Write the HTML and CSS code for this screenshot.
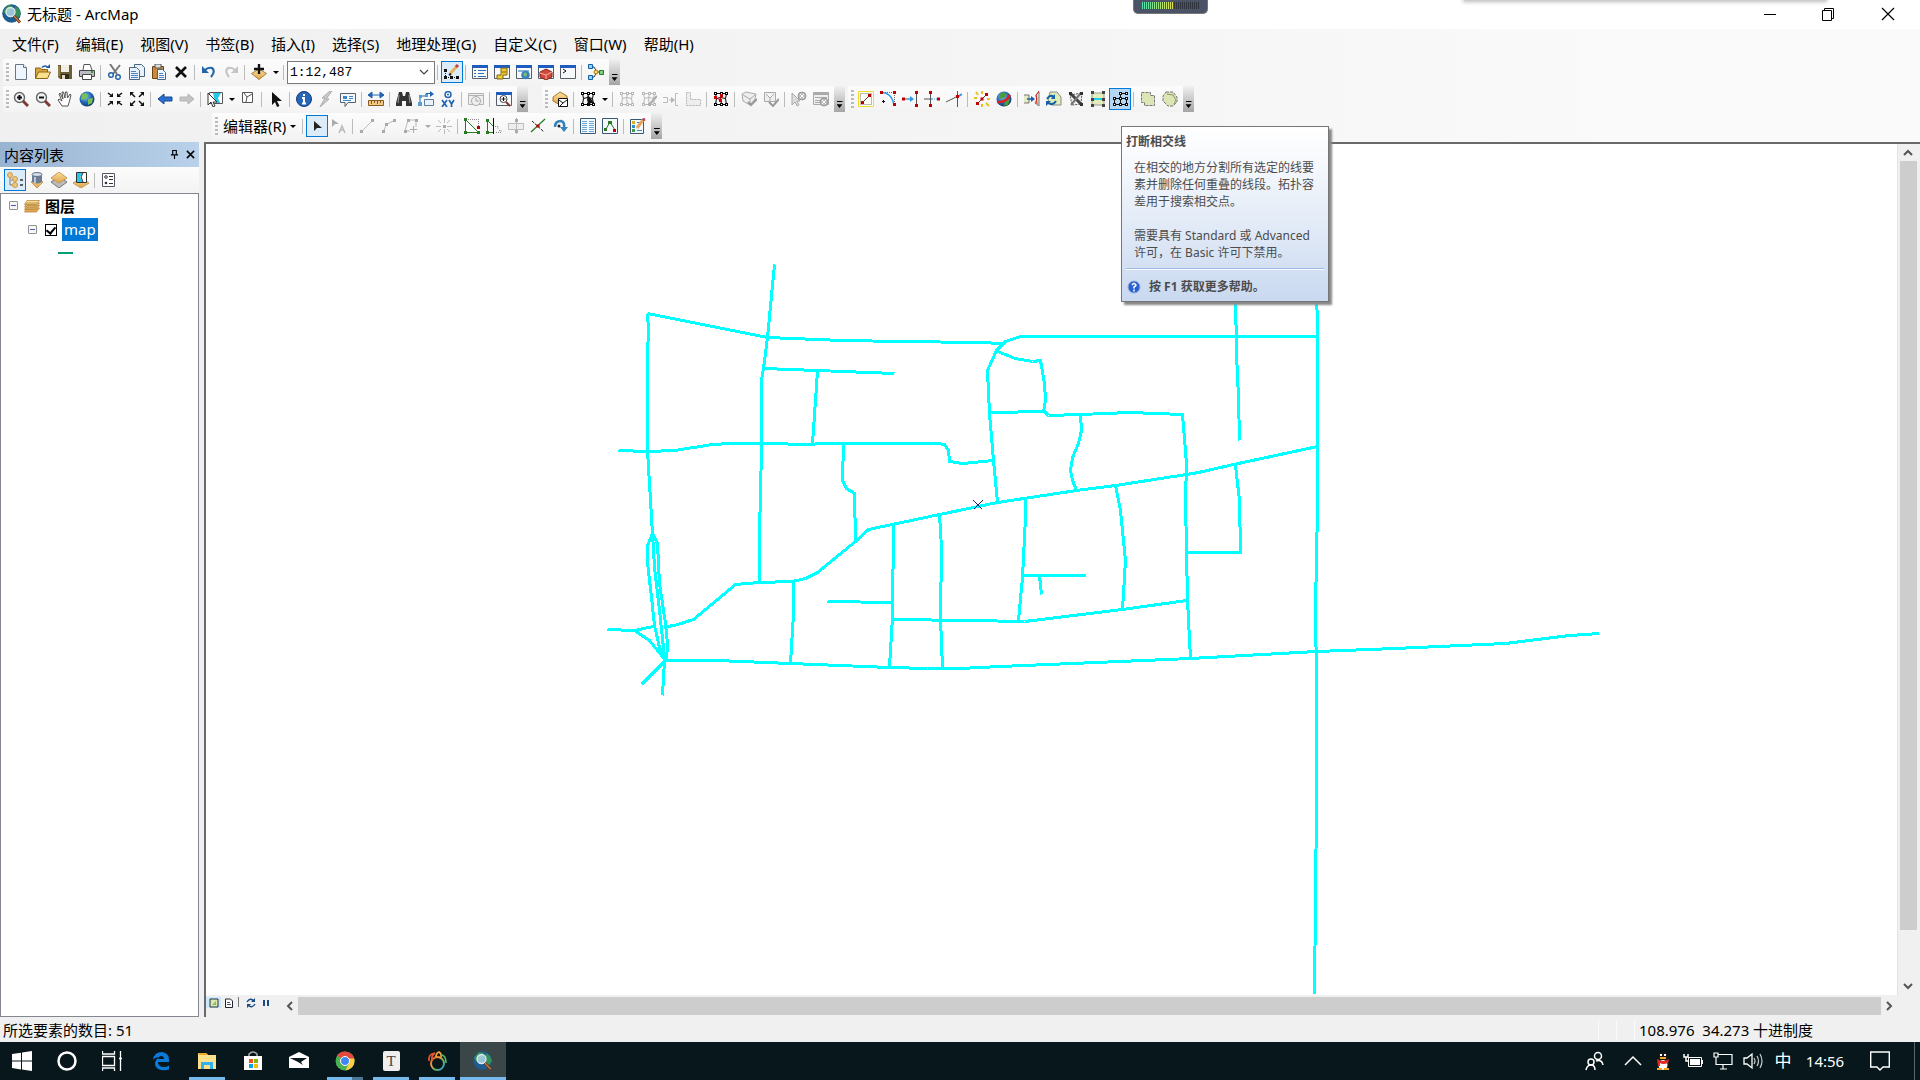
FILE: index.html
```
<!DOCTYPE html>
<html lang="zh-CN">
<head>
<meta charset="utf-8">
<title>无标题 - ArcMap</title>
<link rel="stylesheet" href="styles.css">
</head>
<body>
<svg class="defs" aria-hidden="true">
  <defs>
    <radialGradient id="globe" cx="0.4" cy="0.35" r="0.7"><stop offset="0" stop-color="#7fc4ee"/><stop offset="0.6" stop-color="#1f63b0"/><stop offset="1" stop-color="#123262"/></radialGradient>
    <linearGradient id="gold" x1="0" y1="0" x2="0" y2="1"><stop offset="0" stop-color="#fbe3a2"/><stop offset="1" stop-color="#dfa045"/></linearGradient>
    <linearGradient id="rainbow" x1="0" y1="0" x2="1" y2="1"><stop offset="0" stop-color="#e33f2f"/><stop offset="0.35" stop-color="#f2a33a"/><stop offset="0.65" stop-color="#58b56b"/><stop offset="1" stop-color="#3b8ee0"/></linearGradient>
    <symbol id="arcmap" viewBox="0 0 20 20"><circle cx="9.500" cy="9.500" r="9.300" fill="#1d5c92"/><path d="M1 7l5-6 5 1-2 4-5 5zM13 2l4 3 2 5-4 5-3-5z" fill="#35915a"/><circle cx="8.500" cy="8" r="4.500" fill="#b9dcea" fill-opacity=".8" stroke="#dfe8ea" stroke-width="1.300"/><path d="M12 12l6 6.500" stroke="#7a3f1c" stroke-width="3"/><path d="M12 12l5.500 6" stroke="#e09a68" stroke-width="1"/></symbol>
    <symbol id="window" viewBox="0 0 16 16"><path d="M.5 1.500h15v13H.5z" fill="#f7f9fb" stroke="#555d68"/><path d="M0 1h16v3H0z" fill="#1f5cc0"/></symbol>
    <symbol id="lens" viewBox="0 0 16 16"><circle cx="6.500" cy="6.500" r="5" fill="#eef3f6" stroke="#666" stroke-width="1.400"/><path d="M10 10l5 5" stroke="#7d3b34" stroke-width="3"/><path d="M4 6.500h5" stroke="#111" stroke-width="2"/></symbol>
    <symbol id="mesh" viewBox="0 0 16 16"><path d="M2.500 2.500h11M3.500 7.500l4-1 5 1M2.500 13.500h11M2.500 2.500l1 5-1 6M8.500 2.500l-1 5 1 6M13.500 2.500l-1 5 1 6" fill="none" stroke="currentColor"/><path d="M1 1h3v3H1zM7 1h3v3H7zM12 1h3v3h-3zM1 12h3v3H1zM7 12h3v3H7zM12 12h3v3h-3z" fill="currentColor"/><path d="M2 2h1v1H2zM8 2h1v1H8zM13 2h1v1h-1zM2 13h1v1H2zM8 13h1v1H8zM13 13h1v1h-1z" fill="#fff"/></symbol>
    <symbol id="page" viewBox="0 0 16 16"><path d="M2.500.5h8l3 3v12h-11z" fill="#eef5fd" stroke="#677584"/><path d="M10.500.5v3h3" fill="#fff" stroke="#677584"/></symbol>
  </defs>
</svg>
<div class="app">
  <header class="titlebar">
    <svg class="appicon"><use href="#arcmap"/></svg>
    <h1>无标题 - ArcMap</h1>
    <div class="winbtns">
      <button aria-label="最小化"><svg class="ic"><path d="M2 8.500h12" stroke="#000"/></svg></button>
      <button aria-label="还原"><svg class="ic"><path d="M2.500 4.500h9v10h-9zM4.500 4.500v-2h9v10h-2" fill="none" stroke="#000"/></svg></button>
      <button aria-label="关闭"><svg class="ic"><path d="M2 2l12 12M14 2L2 14" stroke="#000" stroke-width="1.200"/></svg></button>
    </div>
    <div class="recorder"><i></i></div>
    <div class="dropshade"></div>
  </header>

  <div class="bars">
    <nav class="menu">
      <button>文件(F)</button><button>编辑(E)</button><button>视图(V)</button><button>书签(B)</button><button>插入(I)</button><button>选择(S)</button><button>地理处理(G)</button><button>自定义(C)</button><button>窗口(W)</button><button>帮助(H)</button>
    </nav>

    <div class="row">
      <div class="toolbar">
        <i class="grip"></i>
        <button aria-label="新建"><svg class="ic"><use href="#page"/></svg></button>
        <button aria-label="打开"><svg class="ic"><path d="M.5 14V4h5l1 1.500h6V8" fill="#d9a53c" stroke="#8a6414"/><path d="M.5 14.500L3.500 8h12l-3 6.500z" fill="#fbe08c" stroke="#8a6414"/><path d="M7 3.500q3-3 6 0" fill="none" stroke="#1a5aa8" stroke-width="1.500"/><path d="M11 4h4V0z" fill="#1a5aa8"/></svg></button>
        <button aria-label="保存"><svg class="ic"><path d="M1 1h14v14H3l-2-2z" fill="#6b5c34"/><path d="M4 1h8v7H4z" fill="#f1efe4"/><path d="M4 10h8v5H4z" fill="#2e2a20"/><path d="M5 11h3v4H5z" fill="#e4dcc2"/><path d="M2 2v10" stroke="#b9a35c"/></svg></button>
        <button aria-label="打印"><svg class="ic"><path d="M4 6l1-5.500h6L13 6" fill="#fff" stroke="#555"/><path d="M.5 6.500h15v6H.5z" fill="#b9bdc0" stroke="#444"/><path d="M3.500 10.500h9v5h-9z" fill="#fff" stroke="#444"/><path d="M12 8h2" stroke="#2c9a3c" stroke-width="2"/></svg></button>
        <i class="sep"></i>
        <button aria-label="剪切"><svg class="ic"><path d="M3 0l7 10M13 1L6 10" stroke="#777" stroke-width="2"/><circle cx="4" cy="11" r="2.300" fill="none" stroke="#2763a8" stroke-width="1.500"/><circle cx="11" cy="13" r="2.300" fill="none" stroke="#2763a8" stroke-width="1.500"/></svg></button>
        <button aria-label="复制"><svg class="ic"><path d="M5.500.5h7l3 3v9h-10z" fill="#e9f2fc" stroke="#4a6580"/><path d="M.5 3.500h7l3 3v9H.5z" fill="#e9f2fc" stroke="#4a6580"/><path d="M2 7.500h5M2 9.500h7M2 11.500h7M2 13.500h7" stroke="#4a83bf"/></svg></button>
        <button aria-label="粘贴"><svg class="ic"><path d="M1.500 2.500h11v12h-11z" fill="#c98a3c" stroke="#70430f"/><path d="M4 0h6v4H4z" fill="#ddd" stroke="#555"/><path d="M6.500 5.500h5l3 3v7h-8z" fill="#eef5fd" stroke="#4a6580"/><path d="M8 9.500h4M8 11.500h5M8 13.500h5" stroke="#4a83bf"/></svg></button>
        <button aria-label="删除"><svg class="ic"><path d="M3 3l10 10M13 3L3 13" stroke="#111" stroke-width="2.600"/></svg></button>
        <i class="sep"></i>
        <button aria-label="撤消"><svg class="ic"><path d="M4 6q3-3 7-2 4 3-1 9" fill="none" stroke="#2366a8" stroke-width="2.200"/><path d="M1 2v7h7z" fill="#2366a8"/></svg></button>
        <button aria-label="恢复"><svg class="ic"><path d="M12 6Q9 3 5 4q-4 3 1 9" fill="none" stroke="#c4c4c4" stroke-width="2.200"/><path d="M15 2v7H8z" fill="#c4c4c4"/></svg></button>
        <i class="sep"></i>
        <button aria-label="添加数据"><svg class="ic"><path d="M8 5l7.500 4.500L8 15.500.5 9.500z" fill="url(#gold)" stroke="#a8803a"/><path d="M8 0v10M3 5h10" stroke="#111" stroke-width="2.400"/></svg></button>
        <button class="drop" aria-label="更多数据"></button>
        <i class="sep"></i>
        <span class="scale"><select aria-label="地图比例"><option>1:12,487</option></select><svg class="chev"><path d="M1 2l4 4 4-4" fill="none" stroke="#444" stroke-width="1.200"/></svg></span>
        <i class="sep"></i>
        <button class="on" aria-label="编辑器工具条"><svg class="ic"><path d="M2 13.500h12M1.500 14V7" stroke="#111" stroke-dasharray="1 1"/><path d="M0 5h3v3H0zM0 12h3v3H0zM6 12h3v3H6zM12 12h3v3h-3z" fill="#111"/><path d="M6 10l7-8" stroke="#e7b45c" stroke-width="3"/><path d="M12 3l2-2" stroke="#c53f4d" stroke-width="3"/><path d="M5 11l2-1" stroke="#222" stroke-width="2"/></svg></button>
        <i class="sep"></i>
        <button aria-label="内容列表"><svg class="ic"><use href="#window"/><path d="M2 6.500h2M2 9.500h2M2 12.500h2M6 6.500h8M6 9.500h6M6 12.500h8" stroke="#2b6fb5"/></svg></button>
        <button aria-label="目录"><svg class="ic"><use href="#window"/><path d="M7 4h6v7H9v4H3v-4h4z" fill="#f0ca32" stroke="#7a6412"/><path d="M8 8h4" stroke="#7a6412"/></svg></button>
        <button aria-label="搜索"><svg class="ic"><use href="#window"/><path d="M2 7h11" stroke="#8ab4d8" stroke-width="2"/><circle cx="9.500" cy="11" r="4.300" fill="#3a80c0"/><path d="M7 10l3-2 1 3-2 2z" fill="#7ac45c"/></svg></button>
        <button aria-label="ArcToolbox"><svg class="ic"><use href="#window"/><path d="M2 8l6-3 6 3v5l-6 3-6-3z" fill="#d1493c" stroke="#8a2318"/><path d="M2 9l6 2 6-3M8 11v4" fill="none" stroke="#f5b3a6"/></svg></button>
        <button aria-label="Python"><svg class="ic"><use href="#window"/><path d="M3 5l3 2-3 2" fill="none" stroke="#111"/></svg></button>
        <i class="sep"></i>
        <button aria-label="模型构建器"><svg class="ic"><path d="M3 3h3l3 5h4M3 13h3l3-5" fill="none" stroke="#333"/><path d="M.5.500h4v4h-4zM.5 11.500h4v4h-4z" fill="#8fd4f7" stroke="#1461a8"/><circle cx="8" cy="8" r="2" fill="#ffd95a" stroke="#a77b12"/><path d="M11.500 6.500h4v4h-4z" fill="#85cf78" stroke="#267a2c"/></svg></button>
        <button class="more" aria-label="工具条选项"></button>
      </div>
    </div>

    <div class="row">
      <div class="toolbar">
        <i class="grip"></i>
        <button aria-label="放大"><svg class="ic"><use href="#lens"/><path d="M6.500 4v5" stroke="#111" stroke-width="2"/></svg></button>
        <button aria-label="缩小"><svg class="ic"><use href="#lens"/></svg></button>
        <button aria-label="平移"><svg class="ic"><path d="M5 15L1 9l1-1 3 2L2 3l1-1 3 6-1-7h1.500L8 7l.5-6H10l.5 6L13 3l1 1-1.500 6L11 15z" fill="#fff" stroke="#555"/></svg></button>
        <button aria-label="全图"><svg class="ic"><circle cx="8" cy="8" r="7.500" fill="url(#globe)"/><path d="M3 3l4-1 2 3-3 3-4 1zM9 8l5-1-1 5-4 2z" fill="#7abf52"/></svg></button>
        <i class="sep"></i>
        <button aria-label="固定比例放大"><svg class="ic"><path d="M1 2l4 3M15 2l-4 3M1 14l4-3M15 14l-4-3" stroke="#111" stroke-width="1.500"/><path d="M6 2v4H2zM10 2v4h4zM6 14v-4H2zM10 14v-4h4z" fill="#111"/></svg></button>
        <button aria-label="固定比例缩小"><svg class="ic"><path d="M2 2l4 4M14 2l-4 4M2 14l4-4M14 14l-4-4" stroke="#111" stroke-width="1.500"/><path d="M1 5V1h4zM15 5V1h-4zM1 11v4h4zM15 11v4h-4z" fill="#111"/></svg></button>
        <i class="sep"></i>
        <button aria-label="返回"><svg class="ic"><path d="M1 8l6-5v3h8v4H7v3z" fill="#2a6fd0" stroke="#174a94"/></svg></button>
        <button aria-label="前进"><svg class="ic"><path d="M15 8L9 3v3H1v4h8v3z" fill="#c4c4c4" stroke="#b4b4b4"/></svg></button>
        <i class="sep"></i>
        <button aria-label="选择要素"><svg class="ic"><path d="M2.500 1.500h13v11h-13z" fill="#fff" stroke="#555"/><path d="M6 2h8l-3 5 2 5H9L7 7z" fill="#27c7e8"/><path d="M1 2v12l3-3 2 5 2-1-2-4h4z" fill="#fff" stroke="#333"/></svg></button>
        <button class="drop" aria-label="选择方式"></button>
        <button aria-label="清除所选要素"><svg class="ic"><path d="M2.500 1.500h10v10h-10zM4 2l3 4-1 5M7 6l5-3" fill="#fff" stroke="#555"/></svg></button>
        <i class="sep"></i>
        <button aria-label="选择元素"><svg class="ic"><path d="M4 1v13l3-3 2 5 2.500-1L9 10h5z" fill="#111"/></svg></button>
        <i class="sep"></i>
        <button aria-label="识别"><svg class="ic"><circle cx="8" cy="8" r="7.500" fill="#2665b8" stroke="#123c7c"/><path d="M8 3v2M6 7h2v5M6 12.500h4" fill="none" stroke="#fff" stroke-width="2"/></svg></button>
        <button aria-label="超链接"><svg class="ic"><path d="M12 0L4 7h3l-5 9 9-8H8l6-8z" fill="#ccc" stroke="#aaa"/></svg></button>
        <button aria-label="HTML 弹出窗口"><svg class="ic"><path d="M.5 2.500h15v9H8l-3 4v-4H.5z" fill="#f4f8fb" stroke="#54606c"/><path d="M3 5h4v3H3z" fill="#3b86c9"/><path d="M9 5.500h4M9 7.500h4M3 9.500h8" stroke="#3b86c9"/></svg></button>
        <i class="sep"></i>
        <button aria-label="测量"><svg class="ic"><path d="M.5 9.500h15v5H.5z" fill="#f0c987" stroke="#8a5c1f"/><path d="M3.500 10v3M6.500 10v2M9.500 10v3M12.500 10v2" stroke="#8a5c1f"/><path d="M0 4l4-3v6zM16 4l-4-3v6zM4 4h8" fill="#1f63b0" stroke="#1f63b0"/></svg></button>
        <i class="sep"></i>
        <button aria-label="查找"><svg class="ic"><path d="M3 1h3l1 4h2l1-4h3l3 11v3H10v-5H6v5H0v-3z" fill="#333"/><path d="M3 4L2 12M13 4l1 8" stroke="#999"/></svg></button>
        <button aria-label="查找路径"><svg class="ic"><path d="M2 14V5h6V2.500h4" fill="none" stroke="#1f63b0"/><path d="M0 11h4v4H0zM1 4h3v3H1zM7 3h3v3H7z" fill="#5b9bd5"/><path d="M6.500 8.500h9v6h-9z" fill="#e9f2fc" stroke="#5a7f9e"/><path d="M12 0l4 3-4 3z" fill="#1f63b0"/></svg></button>
        <button aria-label="转到 XY"><svg class="ic"><circle cx="8" cy="3.500" r="3" fill="none" stroke="#1f63b0" stroke-width="1.500"/><circle cx="8" cy="3.500" r="1" fill="#1f63b0"/><path d="M2 9l5 7M7 9l-5 7M9 9l2.500 4L14 9M11.500 13v3" fill="none" stroke="#1f63b0" stroke-width="1.700"/></svg></button>
        <i class="sep"></i>
        <button aria-label="时间滑块"><svg class="ic"><path d="M.5 2.500h15v11H.5zM0 4.500h16" fill="#eee" stroke="#b4b4b4"/><circle cx="8" cy="10" r="4.500" fill="#eee" stroke="#aaa"/><path d="M8 7v3h3" fill="none" stroke="#aaa"/></svg></button>
        <i class="sep"></i>
        <button aria-label="创建查看器窗口"><svg class="ic"><use href="#window"/><circle cx="7.500" cy="8" r="3.500" fill="#fff" stroke="#444"/><path d="M7.500 6v4M5.500 8h4" stroke="#111"/><path d="M10 11l4 4" stroke="#7d3b34" stroke-width="2"/></svg></button>
        <button class="more" aria-label="工具条选项"></button>
      </div>
      <div class="toolbar topo">
        <i class="grip"></i>
        <button aria-label="选择拓扑"><svg class="ic"><path d="M1 6l7-5 7 4v4l-7 5-7-4z" fill="url(#gold)" stroke="#a77b2a"/><path d="M6.500 7.500h9v8h-9zM7 9l4 3-3 3M11 12l4-3" fill="#fff" stroke="#111"/></svg></button>
        <i class="sep"></i>
        <button aria-label="拓扑编辑工具"><svg class="ic"><use href="#mesh"/><path d="M8 4v11l3-3 4 1z" fill="#111"/></svg></button>
        <button class="drop" aria-label="拓扑编辑选项"></button>
        <i class="sep"></i>
        <button class="dim" aria-label="修改边"><svg class="ic"><use href="#mesh"/></svg></button>
        <button class="dim" aria-label="修整边"><svg class="ic"><use href="#mesh"/><path d="M8 14l8-9" stroke="#aaa" stroke-width="2"/></svg></button>
        <button class="dim" aria-label="对齐边"><svg class="ic"><path d="M0 11.500h4.500v-5H0M6 9h4M15 2.500h-2.500v12H15" fill="none" stroke="#bbb"/><path d="M8 6l4 3-4 3z" fill="#b4b4b4"/></svg></button>
        <button class="dim" aria-label="概化边"><svg class="ic"><path d="M1.500 1.500h4v7h10v6h-14z" fill="#eee" stroke="#b4b4b4" stroke-dasharray="2 1"/></svg></button>
        <i class="sep"></i>
        <button aria-label="共享要素"><svg class="ic"><use href="#mesh"/><path d="M2 6l5 3 1-5" stroke="#c80000" fill="none"/><path d="M1 5h3v3H1zM6 8h3v3H6zM7 3h3v3H7z" fill="#c80000"/></svg></button>
        <i class="sep"></i>
        <button class="dim" aria-label="验证范围"><svg class="ic"><path d="M1 3l4-2 10 2-1 5-5 6-7-4z" fill="#eee" stroke="#aaa"/><path d="M2 4l7 4 5-4M9 8v5" fill="none" stroke="#aaa"/><path d="M7 11l3 3 6-6" fill="none" stroke="#999" stroke-width="2"/></svg></button>
        <button class="dim" aria-label="验证当前范围"><svg class="ic"><path d="M1.500 1.500h11v9h-11zM3 3l4 4 4-4M7 7v3" fill="#eee" stroke="#aaa"/><path d="M6 11l4 4 6-7" fill="none" stroke="#999" stroke-width="2"/></svg></button>
        <i class="sep"></i>
        <button class="dim" aria-label="修复错误"><svg class="ic"><path d="M1 2v12l3-3 2 4 2-1-2-4h3z" fill="#ddd" stroke="#aaa"/><circle cx="11" cy="5" r="4" fill="#bbb" stroke="#999"/><path d="M9 3l4 4M13 3L9 7" stroke="#fff"/></svg></button>
        <button class="dim" aria-label="错误检查器"><svg class="ic"><path d="M.5 1.500h15v12H.5zM2 6.500h12M2 9.500h8M2 11.500h6" fill="#eee" stroke="#aaa"/><path d="M1 3h14" stroke="#aaa" stroke-width="2"/><circle cx="11" cy="11" r="4" fill="#bbb" stroke="#999"/><path d="M9 9l4 4M13 9l-4 4" stroke="#fff"/></svg></button>
        <button class="more" aria-label="工具条选项"></button>
      </div>
      <div class="toolbar adv">
        <i class="grip"></i>
        <button aria-label="延伸"><svg class="ic"><path d="M.5.500h15v15H.5z" fill="#fffef2" stroke="#f4d92a"/><path d="M2.500 2.500h11v11h-11z" fill="none" stroke="#777" stroke-dasharray="1 1"/><path d="M4 12l8-8" stroke="#444"/><path d="M3 10h3v3H3zM10 3h3v3h-3z" fill="#c00000"/></svg></button>
        <button aria-label="内圆角"><svg class="ic"><path d="M1 1.500h13.500v13" fill="none" stroke="#666" stroke-dasharray="1 1"/><path d="M1 1.500q11 0 13 13" fill="none" stroke="#2d9ae8" stroke-width="1.500"/><path d="M0 0h3v3H0zM13 0h3v3h-3zM13 12h3v3h-3z" fill="#c00000"/><path d="M3.500 9v3M2 10.500h3" stroke="#111"/></svg></button>
        <button aria-label="延伸工具"><svg class="ic"><path d="M1 8h4M14.500 1v14" stroke="#555"/><path d="M5 8h6" stroke="#2d9ae8" stroke-width="1.500"/><path d="M8 5l4 3-4 3z" fill="#2d9ae8"/><path d="M0 6.500h3v3H0zM13 0h3v3h-3zM13 13h3v3h-3z" fill="#c00000"/></svg></button>
        <button aria-label="修剪工具"><svg class="ic"><path d="M0 8h8M6.500 1v14" stroke="#555"/><path d="M8 8h6" stroke="#2d9ae8" stroke-dasharray="1 1"/><path d="M5 0h3v3H5zM5 13h3v3H5zM13 6.500h3v3h-3z" fill="#c00000"/></svg></button>
        <button aria-label="线相交"><svg class="ic"><path d="M0 11l12-6M11.500 0v16" stroke="#555"/><path d="M11 6l5-3" stroke="#2d9ae8" stroke-width="2"/><path d="M10 4h3v3h-3z" fill="#c00000"/></svg></button>
        <i class="sep"></i>
        <button aria-label="拆分多部件要素"><svg class="ic"><path d="M3 13L13 3" stroke="#444"/><path d="M2 11h3v3H2zM11 2h3v3h-3zM6.500 6.500h3v3h-3z" fill="#c00000"/><path d="M2 1l2 3M8 0v3M0 7h3M13 8h3M8 13v3M12 12l3 3" stroke="#e8c21c" stroke-width="2"/></svg></button>
        <button aria-label="构造大地测量要素"><svg class="ic"><circle cx="8" cy="8" r="7.500" fill="url(#globe)"/><path d="M5 1l6 2-3 4-5 1zM9 9l5-1-2 6-4 1z" fill="#4c9b3f"/><path d="M1 11Q10 12 14 4" fill="none" stroke="#e02020" stroke-width="2.500"/></svg></button>
        <i class="sep"></i>
        <button aria-label="对齐至形状"><svg class="ic"><path d="M0 4h5v8H0M15 1l-3 3 1 4-2 4 4 3z" fill="#e3eac6" stroke="#777"/><path d="M15 0l-3 4 1 9" fill="none" stroke="#d22"/><path d="M3 8h6" stroke="#1461a8" stroke-width="1.500"/><path d="M7 5l4 3-4 3z" fill="#1461a8"/></svg></button>
        <button aria-label="替换几何"><svg class="ic"><path d="M4 1h7l4 5v8H6L2 9z" fill="#e3edb9" stroke="#888"/><path d="M1 8q3-5 7-2M10 10q-3 5-8 2" fill="none" stroke="#1461a8" stroke-width="2"/><path d="M9 3v5H5zM0 15v-5h5z" fill="#1461a8"/></svg></button>
        <button aria-label="构造面"><svg class="ic"><path d="M2 4l12-2-1 11-9 1z" fill="#eee" stroke="#555" stroke-dasharray="2 1"/><path d="M2 2l12 12" stroke="#444" stroke-width="3"/><path d="M3 14l9-11" stroke="#777" stroke-width="2"/><path d="M1 1h3v3H1zM12 12h3v3h-3zM12 1h3v3h-3z" fill="#333"/></svg></button>
        <button aria-label="分割面"><svg class="ic"><path d="M2 2h12v12H2z" fill="#e3edb9" stroke="#999"/><path d="M2 8h12" stroke="#19d3ee" stroke-width="2"/><path d="M1 0h3v3H1zM12 0h3v3h-3zM1 7h3v3H1zM12 7h3v3h-3zM1 13h3v3H1zM12 13h3v3h-3z" fill="#444"/></svg></button>
        <button class="on deep" aria-label="打断相交线"><svg class="ic"><path d="M1.500 7.500h13M1.500 13.500h13M2.500 7v7M8.500 14V2.500h6M14.500 7v7" fill="none" stroke="#111"/><path d="M1 6h3v3H1zM7 6h3v3H7zM13 6h3v3h-3zM1 12h3v3H1zM7 12h3v3H7zM13 12h3v3h-3zM7 1h3v3H7zM13 1h3v3h-3z" fill="#111"/><path d="M2 7h1v1H2zM8 7h1v1H8zM14 7h1v1h-1zM2 13h1v1H2zM8 13h1v1H8zM14 13h1v1h-1zM8 2h1v1H8zM14 2h1v1h-1z" fill="#fff"/></svg></button>
        <i class="sep"></i>
        <button aria-label="概化"><svg class="ic"><path d="M1.500 1.500h9v3h4v10h-10v-3h-3z" fill="#dbe5b5" stroke="#777" stroke-dasharray="3 1"/></svg></button>
        <button aria-label="平滑"><svg class="ic"><path d="M4 1h7l4 5v5l-4 4H6L1 10V5z" fill="#dbe5b5" stroke="#777" stroke-dasharray="3 1"/><path d="M5 3l6 1 3 5-2 4" fill="none" stroke="#8c946c"/></svg></button>
        <button class="more" aria-label="工具条选项"></button>
      </div>
    </div>

    <div class="row third">
      <div class="toolbar">
        <i class="grip"></i>
        <button class="editor">编辑器(R)</button>
        <i class="sep"></i>
        <button class="on" aria-label="编辑工具"><svg class="ic"><path d="M5 3v10l3-3h5z" fill="#222"/></svg></button>
        <button class="dim" aria-label="编辑注记工具"><svg class="ic"><path d="M1 1v8l3-3h4z" fill="#aaa"/><path d="M8 15l3-7 3 7M9 12h4" fill="none" stroke="#bbb" stroke-width="1.500"/></svg></button>
        <i class="sep"></i>
        <button class="dim" aria-label="直线段"><svg class="ic"><path d="M3 13L13 3" stroke="#bbb"/><path d="M1 12h3v3H1zM12 1h3v3h-3z" fill="#aaa"/></svg></button>
        <button class="dim" aria-label="弧段"><svg class="ic"><path d="M3 13Q4 5 13 3" fill="none" stroke="#bbb"/><path d="M1 12h3v3H1zM12 1h3v3h-3zM4 5h3v3H4z" fill="#aaa"/></svg></button>
        <button class="dim" aria-label="追踪"><svg class="ic"><path d="M2 13L5 2h8v7M2 13h5" fill="none" stroke="#bbb"/><path d="M1 12h3v3H1zM4 1h3v3H4zM12 1h3v3h-3z" fill="#aaa"/><path d="M10.500 8v7M7 11.500h7" stroke="#aaa"/></svg></button>
        <button class="drop dim" aria-label="更多构造方法"></button>
        <button class="dim" aria-label="点"><svg class="ic"><path d="M8.500 0v5M8.500 11v5M0 8.500h5M11 8.500h5M2 2l3 3M14 2l-3 3M2 14l3-3M14 14l-3-3" stroke="#bbb"/><path d="M7 7h3v3H7z" fill="#aaa"/></svg></button>
        <i class="sep"></i>
        <button aria-label="编辑折点"><svg class="ic"><path d="M1.500 1.500v13h13l-13-13" fill="#fff" stroke="#267a1f"/><path d="M2 1.500h12.500v7" fill="none" stroke="#888" stroke-dasharray="1 1"/><path d="M0 0h3v3H0zM0 13h3v3H0zM13 13h3v3h-3z" fill="#267a1f"/><path d="M13 8h3v3h-3z" fill="#c00000"/></svg></button>
        <button aria-label="整形要素工具"><svg class="ic"><path d="M1.500 3v11.500h6M2 3l5 5" fill="none" stroke="#267a1f"/><path d="M0 1h3v3H0zM0 13h3v3H0z" fill="#267a1f"/><path d="M7.500 0v16" stroke="#111"/><path d="M9 8.500h3v3M13 12.500h2v2h-5" stroke="#888" stroke-dasharray="1 1" fill="none"/></svg></button>
        <button class="dim" aria-label="裁剪面工具"><svg class="ic"><path d="M.5 5.500h15v6H.5z" fill="#eee" stroke="#bbb"/><path d="M8.500 0v16" stroke="#bbb"/><path d="M7 1h3v3H7zM7 12h3v3H7z" fill="#aaa"/></svg></button>
        <button aria-label="分割工具"><svg class="ic"><path d="M1 14L15 1" stroke="#267a1f" stroke-width="1.200"/><path d="M2 3l12 11" stroke="#222" stroke-dasharray="3 1"/><path d="M6.500 6.500h3v3h-3z" fill="#c00000"/></svg></button>
        <button aria-label="旋转工具"><svg class="ic"><path d="M3 9q0-6 6-6 4 1 3 7" fill="none" stroke="#3283bd" stroke-width="2.500"/><path d="M8 9h8l-4 5z" fill="#3283bd"/><circle cx="7" cy="8" r="1.500" fill="#222"/></svg></button>
        <i class="sep"></i>
        <button aria-label="属性"><svg class="ic"><path d="M.5.500h15v15H.5z" fill="#f4f9fd" stroke="#3a5872"/><path d="M2 3.500h5M2 5.500h5M2 7.500h5M2 9.500h5M2 11.500h5M2 13.500h5M9 3.500h5M9 5.500h5M9 7.500h5M9 9.500h5M9 11.500h5M9 13.500h5" stroke="#6ba6d4"/></svg></button>
        <button aria-label="草图属性"><svg class="ic"><path d="M.5.500h15v15H.5z" fill="#f4f9fd" stroke="#3a5872"/><path d="M4 11l4-7 5 8" fill="none" stroke="#267a1f"/><path d="M2 10h3v3H2zM6 3h4v3H6z" fill="#267a1f"/><path d="M11 11h3v3h-3z" fill="#c00000"/></svg></button>
        <i class="sep"></i>
        <button aria-label="创建要素"><svg class="ic"><path d="M.5 1.500h13v14H.5z" fill="#f4f9fd" stroke="#3a5872"/><path d="M2 3h3v3H2z" fill="#d8b02a"/><path d="M2 7h3v3H2z" fill="#3b86c9"/><path d="M2 11h3v3H2z" fill="#3b9a4b"/><path d="M7 4.500h4M7 12.500h5" stroke="#3a86c2"/><path d="M7 10l6-8" stroke="#e7a55c" stroke-width="3"/><path d="M13 2l2-1" stroke="#c53f4d" stroke-width="3"/></svg></button>
        <button class="more" aria-label="工具条选项"></button>
      </div>
    </div>
  </div>

  <main class="work">
    <aside class="toc">
      <div class="tochead"><h2>内容列表</h2>
        <button aria-label="自动隐藏"><svg viewBox="0 0 10 10"><path d="M3 0v5M7 0v5M3 .5h4M1 5.500h8M5 6v4" fill="none" stroke="#000" stroke-width="1.300"/></svg></button>
        <button aria-label="关闭"><svg viewBox="0 0 10 10"><path d="M1 1l8 8M9 1L1 9" stroke="#000" stroke-width="1.700"/></svg></button>
      </div>
      <div class="toctools">
        <button class="on" aria-label="按绘制顺序列出"><svg class="ic"><path d="M3 4v9h4M4 8h3" fill="none" stroke="#777"/><circle cx="3" cy="3" r="2.500" fill="#f0c877" stroke="#c89a50"/><circle cx="8" cy="7" r="2.500" fill="#f0c877" stroke="#c89a50"/><circle cx="8" cy="13" r="2.500" fill="#f0c877" stroke="#c89a50"/><path d="M13 8h3M13 13h3" stroke="#333" stroke-width="1.500"/></svg></button>
        <button aria-label="按源列出"><svg class="ic"><path d="M2 10l6-3 6 3-6 6z" fill="url(#gold)" stroke="#c89a50"/><path d="M3 2v8q5 3 10 0V2z" fill="#6a7b92"/><ellipse cx="8" cy="2.500" rx="5" ry="2" fill="#d5dfe9" stroke="#5e6f86"/><path d="M6 5v6" stroke="#b8c6d8" stroke-width="2"/></svg></button>
        <button aria-label="按可见性列出"><svg class="ic"><path d="M0 10l8-5 8 5-8 6z" fill="#bbb" stroke="#777"/><path d="M0 6l8-6 8 6-8 5z" fill="url(#gold)" stroke="#c89a50"/></svg></button>
        <button aria-label="按选择列出"><svg class="ic"><path d="M0 11l8-5 8 5-8 5z" fill="url(#gold)" stroke="#c89a50"/><path d="M3.500.500h10v10h-10z" fill="#fff" stroke="#333"/><path d="M4 1h6l-3 4 3 5H4z" fill="#27c7e8"/><path d="M10 1L8 5l2 5" fill="none" stroke="#333"/></svg></button>
        <i class="sep"></i>
        <button aria-label="选项"><svg class="ic"><path d="M1.500 1.500h12v13h-12z" fill="#fff" stroke="#556"/><path d="M8 4.500h4M8 7.500h4M8 11.500h4" stroke="#333"/><circle cx="5" cy="5" r="1.300" fill="none" stroke="#333"/><circle cx="5" cy="11" r="1.300" fill="#333"/></svg></button>
      </div>
      <div class="tree">
        <div class="node"><button class="exp" aria-label="折叠"></button><svg class="ic"><path d="M3 10h12.500l-3 4H.5zM3 7.500h12.500l-3 4H.5zM3 5h12.500l-3 4H.5zM3 2.500h12.500l-3 4H.5z" fill="url(#gold)" stroke="#b98a42" stroke-width=".8"/></svg><b>图层</b></div>
        <div class="node child"><button class="exp" aria-label="折叠"></button><input type="checkbox" id="lyr" checked><label for="lyr">map</label></div>
        <div class="node symbolrow"><i></i></div>
      </div>
    </aside>

    <section class="view">
      <div class="mapwrap">
        <svg class="map" role="img" aria-label="道路图">
          <g transform="translate(-205.500 -143.500)" fill="none" stroke="#00ffff" stroke-width="3" stroke-linejoin="round" shape-rendering="crispEdges">
            <path d="M647 313L767 337 842 340 901 341 977 342 1003 343"/>
            <path d="M774 264L767 337 763 368 761 380 761 450 759 533 759 582"/>
            <path d="M647 313L648 330 647 353 647 450 650 500 652 533 647 545 647 562 651 597 654 625 659 647 665 660"/>
            <path d="M652 533L654 567 659 610 664 657M652 533L657 543 659 583 665 623 667 643 666 660"/>
            <path d="M607 629L634 630 653 626M634 630L649 640 665 660 641 684M664 660L662 695"/>
            <path d="M666 626L674 625 693 619 735 584 758 582 792 581 805 578 817 572 855 541 868 529 939 514 997 502 1076 490 1115 485 1186 474 1198 472 1233 464 1317 446"/>
            <path d="M665 660L716 660 790 663 889 667 927 668 960 668 1000 666 1119 661 1190 658 1316 651 1395 648 1505 643 1569 635 1599 633"/>
            <path d="M618 450L647 451 674 450 712 444 729 443 775 443 800 444 830 443 937 443 944 444 948 450 949 461 962 463 993 460"/>
            <path d="M763 368L817 370 894 373M817 371L812 443"/>
            <path d="M843 443L842 480 846 488 854 493 855 540M793 581L793 613 790 663"/>
            <path d="M893 523L892 617 889 666M827 601L892 602M939 514L941 547 940 618 942 668"/>
            <path d="M892 619L969 620 1024 621 1122 609 1186 600M1025 499L1025 517 1022 577 1018 620"/>
            <path d="M1022 575H1085M1039 575L1041 594M1115 485L1120 510 1125 560 1122 609"/>
            <path d="M1317 336H1020L1005 341 996 350 987 370 989 413 993 460 997 502"/>
            <path d="M997 351L1015 358 1032 361 1040 360 1044 383 1045 400 1043 412"/>
            <path d="M991 412L1044 411 1048 415 1080 414 1129 412 1182 414 1186 463 1185 500 1186 550 1187 600 1190 658"/>
            <path d="M1080 414L1081 430 1078 443 1072 457 1070 470 1072 480 1076 490"/>
            <path d="M1235 295L1236 353 1238 397 1239 440M1235 465L1239 500 1240 552 1187 552"/>
            <path d="M1316 295L1317 323 1317 507 1315 607 1316 683 1316 800 1314 994"/>
            <path d="M973 500l9 9M982 500l-9 9" stroke="#1a1a70" stroke-width="1"/>
          </g>
        </svg>
      </div>
      <div class="vscroll"><svg viewBox="0 0 10 10"><path d="M1 7l4-4 4 4" fill="none" stroke="#555" stroke-width="2"/></svg><i></i><svg viewBox="0 0 10 10"><path d="M1 3l4 4 4-4" fill="none" stroke="#555" stroke-width="2"/></svg></div>
      <div class="bottombar">
        <button class="lit" aria-label="数据视图"><svg viewBox="0 0 10 10"><path d="M1 1h8v8H1z" fill="#dce9a8" stroke="#234"/><path d="M3 7l4-4v4z" fill="#8ab878"/></svg></button>
        <button aria-label="布局视图"><svg viewBox="0 0 10 10"><path d="M1.500 1h5l2 2v6.500h-7z" fill="#fff" stroke="#223"/><path d="M3 4.500h3M3 6.500h4" stroke="#456"/></svg></button>
        <i class="vline"></i>
        <button aria-label="刷新"><svg viewBox="0 0 10 10"><path d="M1 4q3-5 7-1M9 6q-3 5-7 1" fill="none" stroke="#1a4a84" stroke-width="1.400"/><path d="M9 0v4H5zM1 10V6h4z" fill="#1a4a84"/></svg></button>
        <button aria-label="暂停"><svg viewBox="0 0 10 10"><path d="M3 2v6M7 2v6" stroke="#1a4a84" stroke-width="2"/></svg></button>
        <div class="hscroll"><svg viewBox="0 0 10 10"><path d="M7 1L3 5l4 4" fill="none" stroke="#555" stroke-width="2"/></svg><i></i><svg viewBox="0 0 10 10"><path d="M3 1l4 4-4 4" fill="none" stroke="#555" stroke-width="2"/></svg></div>
      </div>
    </section>
  </main>

  <footer class="status"><span>所选要素的数目: 51</span><i></i><i></i><output>108.976&nbsp; 34.273 十进制度</output></footer>

  <div class="taskbar">
    <button class="sys" aria-label="开始"><svg viewBox="0 0 20 20"><path d="M0 3l9-1.300V9.500H0zM10 1.500L20 0v9.500H10zM0 10.500h9v8L0 17zM10 10.500h10V20l-10-1.500z" fill="#fff"/></svg></button>
    <button class="sys" aria-label="搜索"><svg viewBox="0 0 20 20"><circle cx="10" cy="10" r="8.500" fill="none" stroke="#fff" stroke-width="2.500"/></svg></button>
    <button class="sys" aria-label="任务视图"><svg viewBox="0 0 20 20"><path d="M.5 0v3h12V0M.5 20v-3h12v3M.5 5.500h12v9H.5zM18.500 0v20M17 7.500h3" fill="none" stroke="#fff" stroke-width="1.300"/></svg></button>
    <div class="pins">
      <button aria-label="Edge"><svg viewBox="0 0 20 20"><path d="M2 9Q3 1 11 1q7 1 7 8v2H7q0 5 6 5 3 0 5-1.500v4Q9 21 5 16q-3-5 3-10-5 1-6 3zM7 8h6q0-3-3-3-2 0-3 3z" fill="#0a7bd9" fill-rule="evenodd"/></svg></button>
      <button class="run" aria-label="文件资源管理器"><svg viewBox="0 0 20 20"><path d="M1 2h8l2 2h8v14H1z" fill="#ffe08a"/><path d="M1 2h8l2 2H2z" fill="#e6a92b"/><path d="M4 18v-7h12v7h-3v-4H7v4z" fill="#2fb1ee"/></svg></button>
      <button aria-label="应用商店"><svg viewBox="0 0 20 20"><path d="M6 6V3q4-4 8 0v3" fill="none" stroke="#aaa" stroke-width="1.500"/><path d="M1 5h18v14H1z" fill="#fff"/><path d="M6 8h4v4H6z" fill="#f25022"/><path d="M11 8h4v4h-4z" fill="#7fba00"/><path d="M6 13h4v4H6z" fill="#00a4ef"/><path d="M11 13h4v4h-4z" fill="#ffb900"/></svg></button>
      <button aria-label="邮件"><svg viewBox="0 0 20 20"><path d="M0 6l10-5 10 5v11H0z" fill="#fff"/><path d="M1 7h17l-6 4 2 3-5-3z" fill="#07171b"/></svg></button>
      <button class="run dual" aria-label="Chrome"><svg viewBox="0 0 20 20"><circle cx="10" cy="10" r="9.500" fill="#4caf50"/><path d="M10 10L2 4.500Q6-.5 12 .7q6 1.500 7.500 7H10z" fill="#e44a3c"/><path d="M19.300 7.500Q21 17 10.500 19.500L14 12l-1-4.500z" fill="#ffce44"/><circle cx="10" cy="10" r="4.500" fill="#4285f4" stroke="#fff"/></svg></button>
      <button class="run" aria-label="Typora"><span class="tee">T</span></button>
      <button class="run" aria-label="Navicat"><svg viewBox="0 0 20 20"><circle cx="10.500" cy="12.500" r="6.500" fill="none" stroke="url(#rainbow)" stroke-width="2"/><path d="M2 10Q1 3 8 2q-4 3-3 7" fill="none" stroke="#e5532f" stroke-width="1.700"/><path d="M9 6q0-4 3-5 3 2 2 5" fill="none" stroke="#f2a33a" stroke-width="1.700"/><path d="M14 4q5 0 5 8" fill="none" stroke="#58b56b" stroke-width="1.700"/></svg></button>
      <button class="run active" aria-label="ArcMap"><svg><use href="#arcmap"/></svg></button>
    </div>
    <div class="tray">
      <button class="wide" aria-label="人脉"><svg viewBox="0 0 20 20"><circle cx="13" cy="5" r="3.500" fill="none" stroke="#fff" stroke-width="1.500"/><circle cx="6" cy="11" r="3" fill="none" stroke="#fff" stroke-width="1.500"/><path d="M1 19q1-5 5-5t4 5M11 10q6-2 7 4" fill="none" stroke="#fff" stroke-width="1.500"/></svg></button>
      <button aria-label="显示隐藏的图标"><svg viewBox="0 0 20 20"><path d="M2 14l8-8 8 8" fill="none" stroke="#fff" stroke-width="1.500"/></svg></button>
      <button aria-label="QQ"><svg viewBox="0 0 20 20"><path d="M5 6q0-5 5-5t5 5l2 7-3 5H6l-3-5z" fill="#16181a"/><ellipse cx="10" cy="14" rx="4.500" ry="5" fill="#fff"/><path d="M4 8q6 4 12 0l-1 4q-5 2-8 0v3H5z" fill="#e02828"/><path d="M7 7h6" stroke="#f5a623" stroke-width="2"/><path d="M4 18h5M11 18h5" stroke="#f5a623" stroke-width="2"/><path d="M7 4h2M11 4h2" stroke="#fff" stroke-width="2"/></svg></button>
      <button aria-label="电源"><svg viewBox="0 0 20 20"><path d="M5.500 6.500h13v9h-13z" fill="none" stroke="#fff"/><path d="M7 8h10v6H7zM19 9h1v4h-1z" fill="#fff"/><path d="M1 3v3h4V3M3 6v4h3" fill="none" stroke="#fff" stroke-width="1.500"/></svg></button>
      <button aria-label="网络"><svg viewBox="0 0 20 20"><path d="M5 3.500h14v10H3V8M10 14v4M7 18h7M1 2h4v4H1zM3 6v6" fill="none" stroke="#fff" stroke-width="1.200"/></svg></button>
      <button aria-label="音量"><svg viewBox="0 0 20 20"><path d="M1 7h3l5-4v14l-5-4H1z" fill="none" stroke="#fff" stroke-width="1.300"/><path d="M11 7q2 3 0 6M14 5q3 5 0 10M17 3q4 7 0 14" fill="none" stroke="#ccc" stroke-width="1.200"/></svg></button>
      <button class="ime">中</button>
      <time>14:56</time>
      <button class="note" aria-label="通知"><svg viewBox="0 0 20 20"><path d="M.7 1h18.600v15H13l-3 3-3-3H.7z" fill="none" stroke="#fff" stroke-width="1.400"/></svg></button>
      <button class="desk" aria-label="显示桌面"></button>
    </div>
  </div>

  <div class="tip" role="tooltip">
    <h3>打断相交线</h3>
    <p>在相交的地方分割所有选定的线要<br>素并删除任何重叠的线段。拓扑容<br>差用于搜索相交点。</p>
    <p>需要具有 Standard 或 Advanced<br>许可，在 Basic 许可下禁用。</p>
    <div class="help"><svg viewBox="0 0 14 14"><circle cx="7" cy="7" r="6" fill="#2a60cf" stroke="#8fa9da"/><path d="M5 5q2-3 4 0 0 1-2 2v1.500M7 9.500v2" fill="none" stroke="#fff" stroke-width="1.500"/></svg><b>按 F1 获取更多帮助。</b></div>
  </div>
</div>
</body>
</html>
```
FILE: styles.css
```
* { box-sizing: border-box; }
body { margin: 0; font: 15px/20px "Noto Sans", "Noto Sans CJK SC", sans-serif; color: #000; background: #f0f0f0; }
button { border: 0; padding: 0; margin: 0; background: none; font: inherit; color: inherit; display: flex; align-items: center; justify-content: center; flex: none; }
h1, h2, h3, p { margin: 0; font-size: 15px; font-weight: 400; }
svg { display: block; flex: none; }
.defs { position: absolute; width: 0; height: 0; }
.ic { width: 16px; height: 16px; }
.app { position: relative; min-height: 100vh; display: flex; flex-direction: column; overflow: hidden; }

.titlebar { position: relative; height: 29px; display: flex; align-items: center; gap: 5px; padding: 0 1px 2px 2px; background: #fff; }
.appicon { width: 20px; height: 20px; }
.winbtns { margin-left: auto; display: flex; }
.winbtns button { width: 58px; height: 27px; }
.winbtns button:last-child { width: 62px; }
.recorder { position: absolute; left: 59%; top: 0; width: 75px; height: 14px; background: #4b5366; border: 1px solid #777; border-top: 0; border-radius: 0 0 5px 5px; padding: 2px 8px; }
.recorder i { display: block; height: 7px; background: repeating-linear-gradient(90deg, transparent 0 1px, #4b5366 1px 2px), linear-gradient(90deg, #4fe0b0, #e6e052 55%, #30343f 56%); }
.dropshade { position: absolute; right: 94px; top: -4px; width: 362px; height: 5px; background: #ccc; box-shadow: 0 0 4px 1px #bbb; }

.bars { background: linear-gradient(90deg, #f0f0f0, #f5f5f5 55%, #fafafa 85%); padding-bottom: 2px; }
.menu { height: 30px; display: flex; gap: 1px; padding: 0 4px 1px; align-items: center; }
.menu button { padding: 0 8px; height: 24px; }
.row { display: flex; height: 26px; margin-bottom: 1px; padding-left: 3px; }
.row.third { padding-left: 212px; }
.toolbar { display: flex; align-items: center; height: 26px; background: linear-gradient(#fcfcfc, #f3f3f3); border-radius: 2px; }
.topo { margin-left: 14px; }
.adv { margin-left: 3px; }
.toolbar button { width: 22px; height: 22px; }
.grip { width: 3px; height: 18px; margin: 0 1px 0 3px; background: repeating-linear-gradient(#bbb 0 2px, transparent 2px 4px); }
.sep { width: 1px; height: 15px; margin: 0 3px 0 2px; background: #bbb; flex: none; }
.toolbar button.drop { width: 11px; }
.drop::after, .editor::after { content: ""; border: 3px solid transparent; border-top: 3px solid #000; border-bottom: 0; }
.drop.dim::after { border-top-color: #aaa; }
.toolbar button.editor { width: auto; gap: 4px; padding: 0 4px; }
.on { border: 1px solid #0078d7; background: #dcebf8; }
.on.deep { background: #b5d7f3; }
.dim { color: #b8b8b8; }
.toolbar button.more { width: 11px; height: 26px; margin-left: 2px; background: linear-gradient(#f0f0f0, #a5a5a5); align-items: flex-end; padding-bottom: 4px; }
.more::after { content: ""; width: 6px; height: 7px; background: #000; clip-path: polygon(0 0, 100% 0, 100% 15%, 0 15%, 0 45%, 100% 45%, 50% 100%, 0 45%); }
.scale { width: 148px; height: 23px; display: flex; align-items: center; border: 1px solid #7a7a7a; background: #fff; }
.scale select { appearance: none; flex: 1; border: 0; padding: 0 0 0 2px; height: 20px; background: none; color: #000; font: 13px "Liberation Mono", monospace; }
.chev { width: 10px; height: 8px; margin-right: 5px; }

.work { flex: 1; display: flex; gap: 5px; min-height: 0; padding-bottom: 1px; }
.toc { width: 199px; flex: none; display: flex; flex-direction: column; }
.tochead { height: 25px; display: flex; align-items: center; padding: 0 4px; gap: 7px; background: linear-gradient(90deg, #99b4d1, #b9d1ea); }
.tochead h2 { margin-right: auto; }
.tochead svg { width: 9px; height: 9px; }
.toctools { height: 26px; display: flex; align-items: center; padding-left: 4px; background: linear-gradient(#fcfcfc, #f3f3f3); }
.toctools button { width: 22px; height: 22px; }
.tree { flex: 1; border: 1px solid #828790; background: #fff; }
.node { display: flex; align-items: center; height: 23px; padding-left: 8px; }
.exp { width: 9px; height: 9px; border: 1px solid #919191; border-radius: 1px; background: linear-gradient(#4b63a7, #4b63a7) center / 5px 1px no-repeat #f6f6f6; }
.node svg { margin: 0 5px 0 6px; }
.child { padding-left: 27px; margin-top: 1px; }
.child input { appearance: none; width: 12px; height: 12px; margin: 0 5px 0 8px; border: 1px solid #000; background: #fff; display: grid; place-items: center; }
.child input:checked::after { content: ""; width: 4px; height: 7px; margin-bottom: 2px; border: solid #000; border-width: 0 2px 2px 0; transform: rotate(40deg); }
.child label { height: 23px; line-height: 22px; padding: 0 2px; background: #0078d7; color: #fff; }
.symbolrow { padding-left: 57px; }
.symbolrow i { width: 15px; height: 2px; background: #00a078; }

.view { flex: 1; min-width: 0; display: grid; grid-template-columns: 1fr 22px; grid-template-rows: 1fr 22px; border: solid #696969; border-width: 2px 0 0 2px; background: #f0f0f0; }
.mapwrap { background: #fff; border-right: 1px solid #e3e3e3; overflow: hidden; min-height: 0; }
.map { width: 100%; height: 100%; }
.vscroll { display: flex; flex-direction: column; align-items: center; padding: 4px 3px 4px 1px; gap: 3px; }
.vscroll svg, .hscroll svg { width: 10px; height: 10px; }
.vscroll i { flex: 1; width: 17px; margin-bottom: 48px; background: #cdcdcd; }
.bottombar { grid-column: 1 / 3; display: flex; align-items: flex-start; padding: 2px 26px 2px 0; }
.bottombar button { width: 15px; height: 11px; }
.bottombar button svg { width: 10px; height: 10px; }
.bottombar .lit { background: #cce8ff; }
.vline { width: 1px; height: 10px; margin: 0 4px 0 2px; background: #777; }
.hscroll { flex: 1; display: flex; align-items: center; gap: 3px; height: 18px; margin-left: 12px; }
.hscroll i { flex: 1; height: 18px; background: #cdcdcd; }

.status { height: 24px; display: flex; align-items: center; padding-left: 3px; }
.status span { margin-right: auto; }
.status i { width: 18px; height: 20px; border-left: 1px solid #fafafa; }
.status output { width: 286px; padding-left: 4px; border-left: 1px solid #fafafa; }

.taskbar { height: 38px; display: flex; background: #07171b; color: #fff; }
.taskbar button { width: 45px; height: 38px; }
.taskbar button.sys { padding-right: 2px; }
.taskbar svg { width: 20px; height: 20px; }
.pins { display: flex; margin-left: 3px; }
.pins button { position: relative; width: 46px; }
.run::after { content: ""; position: absolute; left: 5px; right: 5px; bottom: 0; height: 3px; background: #76b9ed; }
.dual::after { background: linear-gradient(90deg, #76b9ed 70%, #4d7797 70%); }
.active { background: #3a4648; }
.active::after { left: 0; right: 0; }
.tee { width: 17px; height: 20px; line-height: 20px; background: #eee; color: #444; font-family: "Liberation Serif", serif; border-radius: 2px; }
.tray { margin-left: auto; display: flex; align-items: center; }
.tray button { width: 30px; }
.tray button.wide { width: 46px; }
.tray time { width: 54px; text-align: center; }
.ime { font-size: 17px; }
.tray button.note { width: 56px; margin-right: 6px; }
.tray button.desk { width: 6px; border-left: 1px solid #5a6668; }

.tip { position: absolute; left: 1121px; top: 126px; width: 208px; padding: 6px 4px 6px; border: 1px solid #767676; background: linear-gradient(#fff, #f4f7fc 25%, #c9d9f0); box-shadow: 3px 3px 2px #888; color: #4c4c4c; font-size: 12px; line-height: 17px; }
.tip h3 { font-size: 12px; font-weight: 700; margin-bottom: 9px; }
.tip p { font-size: 12px; margin: 0 0 17px 8px; white-space: nowrap; }
.tip p + p { margin-bottom: 7px; }
.help { display: flex; align-items: center; gap: 8px; padding: 9px 0 0 1px; border-top: 1px solid #9ab8e0; box-shadow: inset 0 1px #fff; }
.help svg { width: 14px; height: 14px; }
```
